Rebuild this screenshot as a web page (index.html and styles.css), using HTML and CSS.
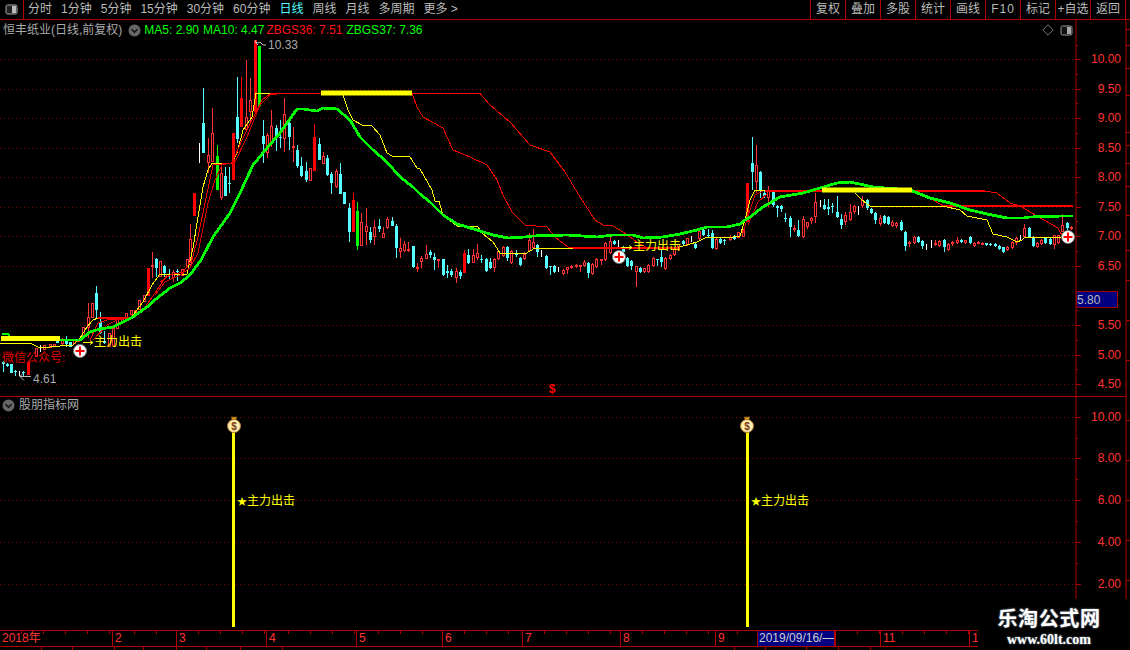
FILE: index.html
```html
<!DOCTYPE html>
<html lang="zh">
<head>
<meta charset="utf-8">
<title>恒丰纸业</title>
<link rel="stylesheet" href="styles.css">
</head>
<body>
<div class="app">
  <header class="toolbar">
    <div class="layout-cell">
      <svg class="panel-icon" width="13" height="11" viewBox="0 0 13 11"><rect x="1" y="1" width="11" height="9" rx="1.5" fill="#222" stroke="#aaa"/><rect x="7" y="2" width="4" height="7" fill="#bbb"/></svg>
    </div>
    <nav class="tabs">
      <span>分时</span><span>1分钟</span><span>5分钟</span><span>15分钟</span><span>30分钟</span><span>60分钟</span>
      <span class="active">日线</span><span>周线</span><span>月线</span><span>多周期</span><span>更多 &gt;</span>
    </nav>
    <div class="actions">
      <span>复权</span><span>叠加</span><span>多股</span><span>统计</span><span>画线</span><span class="wide">F10</span><span>标记</span><span>+自选</span><span>返回</span>
    </div>
  </header>

  <section class="panel upper">
    <div class="legend">
      <span class="stock">恒丰纸业(日线,前复权)</span>
      <svg class="chev" width="13" height="13" viewBox="0 0 13 13"><circle cx="6.5" cy="6.5" r="6" fill="#666"/><path d="M3.5 5.2l3 3 3-3" fill="none" stroke="#111" stroke-width="1.5"/></svg>
      <span class="green">MA5: 2.90</span><span class="green">MA10: 4.47</span><span class="red">ZBGS36: 7.51</span><span class="green">ZBGS37: 7.36</span>
    </div>
    <div class="corner-tools">
      <svg width="12" height="12" viewBox="0 0 12 12"><path d="M6 .8L11.2 6 6 11.2.8 6z" fill="none" stroke="#777"/></svg>
      <svg width="13" height="11" viewBox="0 0 13 11"><rect x="1" y="1" width="11" height="9" rx="1.5" fill="#111" stroke="#999"/><rect x="7" y="2" width="4" height="7" fill="#aaa"/></svg>
    </div>
    <svg class="chart" width="1130" height="376" viewBox="0 20 1130 376">
      <path class="grid" d="M0 59.5H1075M0 89.5H1075M0 118.5H1075M0 148.5H1075M0 177.5H1075M0 207.5H1075M0 236.5H1075M0 266.5H1075M0 325.5H1075M0 355.5H1075M0 384.5H1075"/>
      <g id="candles"></g>
      <polyline class="thin yellow" points="0,343 30,343 40,348 60,346 73,345 80,338 87,327 93,320 98,318"/>
      <polyline class="thin red2" points="90,340 98,323 107,320 130,318 143,310 157,290 167,275"/>
      <polyline class="thin red3" points="93,340 107,325 117,320 130,318"/>
      <polyline class="mid red1" points="98,318 130,318"/>
      <polyline class="thin yellow" points="130,318 133,315 143,302 152,285 160,274 187,274 193,248 198,217 203,187 208,170 212,163 232,163 237,153 243,130 252,117 256,93 272,93"/>
      <polyline class="thin red2" points="160,282 170,275 183,272 192,260 198,237 205,203 213,165 232,163 242,140 253,118 262,100 270,94 280,93"/>
      <polyline class="thin red3" points="155,295 165,282 180,275 190,268 198,253 208,203 215,180 222,165 235,162 247,137 260,105 270,95 285,93"/>
      <polyline class="thin red2" points="270,93.500 480,93.500 490,105 510,122 530,145 550,152 565,172 580,197 595,220 603,225 613,226 623,232 637,242 647,248"/>
      <polyline class="thin red2" points="412,93 417,107 423,117 443,128 453,150 470,157 487,165 497,180 503,195 512,212 525,225 547,227 555,237 568,247 573,248"/>
      <polyline class="mid red1" points="573,248 680,248"/>
      <polyline class="thin yellow" points="343,95 348,110 353,120 362,125 372,126 380,135 387,153 392,156 410,157 417,168 420,169 432,190 435,201 439,201 443,215 457,226 478,227 482,233 493,242 500,253 525,254 535,248 573,248"/>
      <polyline class="thin yellow" points="680,247 697,242 707,237 733,237 740,236 745,220 750,200 755,190 765,191"/>
      <polyline class="thin red3" points="743,233 750,210 755,195 763,191"/>
      <polyline class="thin red3" points="748,225 758,202 768,193"/>
      <polyline class="mid red1" points="765,191 822,191"/>
      <polyline class="mid red1" points="912,191 985,191"/>
      <polyline class="thin red2" points="985,191 997,193 1010,203 1020,206 1037,216 1058,228 1063,237"/>
      <polyline class="thin red2" points="913,191 930,198 943,206"/>
      <polyline class="mid red1" points="943,206 1073,206"/>
      <polyline class="thin yellow" points="855,193 862,200 870,206 943,206 960,210 967,216 987,220 993,234 1007,237 1017,242 1022,240 1025,237 1063,237"/>
      <polyline class="trend" points="60,340 80,340 90,332 100,329 113,327 133,317 147,307 156,299 170,288 180,283 190,275 201,260 213,237 230,213 240,193 253,165 267,148 280,133 297,109 303,109 317,111 323,108 337,109 350,120 360,137 373,150 387,162 400,177 413,187 420,194 430,202 443,215 457,224 467,227 477,230 493,235 508,238 525,237 533,236 567,235 597,237 613,235 633,235 643,238 663,237 680,234 697,230 707,227 727,227 740,224 745,220 750,217 763,207 780,197 803,193 820,188 837,183 850,182 873,187 910,190 930,198 950,203 970,210 987,214 1007,218 1023,218 1030,217 1063,216 1073,216"/>
      <polyline class="trend" points="2,334 8,334 10,336"/>
      <path class="bar" d="M1 338.500H60M321 93H412M822 190H912"/>
      <path class="axis" d="M1076 20V396M1126 20V396M1076 59.500h5M1076 89.500h5M1076 118.500h5M1076 148.500h5M1076 177.500h5M1076 207.500h5M1076 236.500h5M1076 266.500h5M1076 325.500h5M1076 355.500h5M1076 384.500h5M1076 45.500h2M1076 74.500h2M1076 103.500h2M1076 133.500h2M1076 162.500h2M1076 192.500h2M1076 221.500h2M1076 251.500h2M1076 310.500h2M1076 340.500h2M1076 369.500h2M1126 29.500h4M1126 45.500h4M1126 68.500h4M1126 95.500h4M1126 132.500h4M1126 145.500h4M1126 163.500h4M1126 186.500h4M1126 215.500h4M1126 250.500h4M1126 280.500h4M1126 320.500h4M1126 360.500h4"/>
      <g class="price">
        <text x="1121" y="63">10.00</text><text x="1121" y="93">9.50</text><text x="1121" y="122">9.00</text><text x="1121" y="152">8.50</text><text x="1121" y="181">8.00</text><text x="1121" y="211">7.50</text><text x="1121" y="240">7.00</text><text x="1121" y="270">6.50</text><text x="1121" y="329">5.50</text><text x="1121" y="359">5.00</text><text x="1121" y="388">4.50</text>
      </g>
      <rect class="current-box" x="1076.500" y="291.500" width="41" height="16"/>
      <text class="current" x="1077" y="304">5.80</text>
      <g class="note">
        <text class="gray" x="268" y="49">10.33</text>
        <text class="gray" x="33" y="383">4.61</text>
        <path class="arrow" d="M266 45h-3l-3-3-2 1-3-1 1-2M255 42l3 3"/>
        <path class="arrow" d="M31 376.500H20m4-4l-4 4 4 4"/>
        <text class="bull" x="94" y="346">主力出击</text>
        <text class="bull" x="633" y="250">主力出击</text>
        <path class="arrow-y" d="M83 342.500h10m-3-2l3 2-3 2"/>
        <path class="arrow-y" d="M621 247.500h11m-3-2l3 2-3 2"/>
        <text class="wechat" x="2" y="362">微信公众号:</text>
        <text class="dollar" x="552" y="393">$</text>
      </g>
      <g class="plus"><circle cx="80" cy="351" r="6.500"/><path d="M80 346.500v9M75.500 351h9"/></g>
      <g class="plus"><circle cx="619" cy="257" r="6.500"/><path d="M619 252.500v9M614.500 257h9"/></g>
      <g class="plus"><circle cx="1068" cy="237" r="6.500"/><path d="M1068 232.500v9M1063.500 237h9"/></g>
    </svg>
  </section>

  <section class="panel lower">
    <div class="legend lower-legend">
      <svg class="chev" width="13" height="13" viewBox="0 0 13 13"><circle cx="6.5" cy="6.5" r="6" fill="#666"/><path d="M3.5 5.2l3 3 3-3" fill="none" stroke="#111" stroke-width="1.5"/></svg>
      <span class="stock">股朋指标网</span>
    </div>
    <svg class="chart" width="1130" height="234" viewBox="0 396 1130 234">
      <defs>
        <g id="bag">
          <path d="M-3 -9h6l-1.500 3h-3z" fill="#e0a020" stroke="#7a4a10" stroke-width=".8"/>
          <circle cx="0" cy="0" r="6.500" fill="#ffeeb0" stroke="#b07828"/>
          <text class="bag-sign" x="0" y="3.500">$</text>
        </g>
      </defs>
      <path class="grid" d="M0 417.500H1075M0 458.500H1075M0 500.500H1075M0 542.500H1075M0 584.500H1075"/>
      <path class="signal" d="M233.500 417V627M747.500 417V627"/>
      <use href="#bag" x="234" y="426"/>
      <use href="#bag" x="747" y="426"/>
      <text class="bull" x="237" y="505"><tspan class="star">★</tspan>主力出击</text>
      <text class="bull" x="751" y="505"><tspan class="star">★</tspan>主力出击</text>
      <path class="axis" d="M0 396.500H1126M1076 396V599M1126 396V599M1076 417.500h5M1076 458.500h5M1076 500.500h5M1076 542.500h5M1076 584.500h5M1076 438.500h2M1076 479.500h2M1076 521.500h2M1076 563.500h2M1126 420.500h4M1126 460.500h4M1126 500.500h4M1126 540.500h4M1126 580.500h4"/>
      <g class="price">
        <text x="1121" y="421">10.00</text><text x="1121" y="462">8.00</text><text x="1121" y="504">6.00</text><text x="1121" y="546">4.00</text><text x="1121" y="588">2.00</text>
      </g>
    </svg>
  </section>

  <div class="timeline">
    <span class="month" style="width:112px">2018年</span>
    <span class="month" style="width:64px">2</span>
    <span class="month" style="width:90px">3</span>
    <span class="month" style="width:90px">4</span>
    <span class="month" style="width:86px">5</span>
    <span class="month" style="width:80px">6</span>
    <span class="month" style="width:98px">7</span>
    <span class="month" style="width:95px">8</span>
    <span class="month" style="width:42px">9</span>
    <span class="date">2019/09/16/—</span>
    <span class="month blank" style="width:45px"></span>
    <span class="month" style="width:89px">11</span>
    <span class="month" style="width:10px">1</span>
  </div>
  <div class="status">
    <i style="width:42px"></i><i style="width:31px"></i><i style="width:42px"></i><i style="width:29px"></i><i style="width:33px"></i><i style="width:30px"></i><i style="width:34px"></i><i style="width:42px"></i><i style="width:452px"></i><i style="width:31px"></i><i style="width:41px"></i><i style="width:32px"></i><i style="width:32px"></i>
  </div>
  <aside class="watermark">
    <strong>乐淘公式网</strong>
    <em>www.60lt.com</em>
  </aside>
</div>
<script src="chart.js"></script>
</body>
</html>
```
FILE: styles.css
```css
* { box-sizing: border-box; }
html, body { margin: 0; padding: 0; background: #000; }
body { font: 12px "Liberation Sans", "Noto Sans CJK SC", sans-serif; color: #bbb; }
.app { position: relative; width: 1130px; height: 650px; overflow: hidden; background: #000; display: flex; flex-direction: column; }

.toolbar { height: 20px; flex: none; display: flex; align-items: stretch; border-bottom: 1px solid #b00000; line-height: 19px; }
.layout-cell { width: 24px; border-right: 1px solid #b00000; display: flex; align-items: center; justify-content: center; }
.tabs { display: flex; gap: 9px; padding-left: 4px; white-space: nowrap; }
.tabs .active { color: #5ff; }
.actions { margin-left: auto; margin-right: 4px; display: flex; border-right: 1px solid #b00000; }
.actions span { width: 35px; text-align: center; border-left: 1px solid #b00000; white-space: nowrap; }
.actions .wide { letter-spacing: 1px; }

.panel { position: relative; flex: none; }
.upper { height: 376px; }
.lower { height: 234px; }
.chart { display: block; }

.legend { position: absolute; left: 3px; top: 2px; display: flex; align-items: center; gap: 4px; white-space: nowrap; line-height: 16px; }
.legend .chev { margin: 0 -1px 0 2px; }
.lower-legend { left: 2px; top: 1px; }
.lower-legend .chev { margin: 0; }
.stock { color: #aaa; }
.green { color: #0f0; }
.red { color: #f11; margin-left: -2px; }
.corner-tools { position: absolute; left: 1042px; top: 4px; display: flex; align-items: center; gap: 6px; }

.grid { fill: none; stroke: #800000; stroke-width: 1; stroke-dasharray: 1 3; }
.axis { fill: none; stroke: #b00000; stroke-width: 1; }
.price text { fill: #f33; text-anchor: end; font-size: 12px; }
.current-box { fill: #000080; stroke: #a00000; }
.current { fill: #bbb; font-size: 12px; }

.thin, .mid, .trend { fill: none; stroke-linejoin: round; shape-rendering: crispEdges; }
.thin { stroke-width: 1; }
.mid { stroke: #f00; stroke-width: 1.400; }
.yellow { stroke: #ff0; }
.red1 { stroke: #f00; }
.red2 { stroke: #f00; }
.red3 { stroke: #d80000; }
.trend { stroke: #0f0; stroke-width: 2.800; }
.bar { fill: none; stroke: #ff0; stroke-width: 5; }
.signal { fill: none; stroke: #ff0; stroke-width: 3; }

.note text, .bull { font-size: 12px; }
.gray { fill: #aaa; }
.bull { fill: #ff0; }
.star { font-size: 10px; }
.wechat { fill: #e00000; }
.dollar { fill: #f00; font-weight: bold; text-anchor: middle; }
.arrow { fill: none; stroke: #bbb; }
.arrow-y { fill: none; stroke: #ff0; }
.plus circle { fill: #fff; stroke: #777; stroke-width: 1; }
.plus path { fill: none; stroke: #f00; stroke-width: 2; }
.bag-sign { fill: #7a3a10; font-size: 10px; font-weight: bold; text-anchor: middle; }

.cyan { fill: #5ff; }
.wick-red { fill: #f33; }
.solid-red { fill: #f00; }
.solid-green { fill: #0f0; }
.white { fill: #fff; }
.hollow { fill: #000; stroke: #f33; stroke-width: 1; }
#candles { shape-rendering: crispEdges; }

.timeline { height: 17px; width: 978px; flex: none; display: flex; border-top: 1px solid #b00000; border-bottom: 1px solid #b00000; line-height: 15px; color: #f33; white-space: nowrap; }
.month { flex: none; padding-left: 2px; border-left: 1px solid #b00000; overflow: hidden;
  background: repeating-linear-gradient(90deg, transparent 0 21px, #b00000 21px 22px) 0 0 / 100% 3px no-repeat; }
.month:first-child { border-left: 0; }
.date { flex: none; width: 78px; background: #000080; color: #ccc; border: 1px solid #b00000; border-width: 0 1px; padding-left: 1px; line-height: 15px; overflow: hidden; }
.status { flex: none; height: 3px; width: 978px; display: flex; }
.status i { flex: none; border-right: 1px solid #b00000; }

.watermark { position: absolute; left: 978px; top: 600px; width: 152px; height: 50px; background: #000; color: #fff; display: flex; flex-direction: column; align-items: center; padding: 6px 10px 0 0; text-shadow: 0 0 2px #9ab; }
.watermark strong { font: bold 20px/24px "Noto Sans CJK SC", sans-serif; letter-spacing: .6px; }
.watermark em { font: bold 14px/16px "Liberation Serif", serif; margin-top: 2px; }
```
FILE: chart.js
```js
// [kind, x, bodyTop, bodyBottom, high, low] in page pixels.
// c cyan, r hollow red, R solid red, g solid green, w white doji
var CANDLES = [
['c',3,362,364,361,372],['c',7,364,366,363,367],['c',11,364,373],['c',15,371,372,370,376],['w',19,371,376],['c',23,372,373,371,376],
['R',28,362,375],['r',36,348,357],['w',40,345,352],['r',44,345,350],['r',50,344,348],['r',54,344,347],['c',57,340,343],['r',62,340,344,338,345],['c',66,339,344,336,347],['c',70,342,347],['r',74,339,344],['r',78,339,342],
['r',83,327,338],['r',88,317,328,303,338],['r',92,303,318],['c',96,293,310,286,319],['c',100,322,333,312,334],['c',104,341,343,331,344],['r',109,333,347],['r',113,328,346],['r',117,317,329],['r',122,317,322],['r',126,313,320],['r',131,310,315],['r',135,310,314],['r',139,300,310],['r',144,295,302],
['R',148,268,296],['r',152,265,267,252,278],['c',156,259,268,258,277],['r',160,261,277],['c',164,266,273,265,277],['c',169,274,275,269,280],['r',173,272,278,270,282],['c',177,271,272,269,281],['r',182,269,276],['r',187,259,267],['r',190,239,265,224,266],['R',194,193,216],
['w',199,143,163],['c',203,123,153,88,153],['r',208,155,163,138,173],['r',212,133,162,108,162],['g',217,156,190,145,190],['r',221,173,198,163,200],['c',225,176,196,167,196],['c',229,183,184,167,193],['R',233,133,180],['c',237,117,139,77,143],['R',241,98,127,77,127],['r',246,117,130,60,130],['r',250,100,112,78,123],['R',255,40,112],['g',259,46,106],
['c',263,136,144,120,163],['r',267,135,153,133,158],['r',271,126,143,110,147],['c',276,128,138,125,151],['c',280,137,138,120,148],['r',284,114,139,98,152],['c',289,123,137,120,150],['r',293,146,148,127,162],['c',297,150,166,145,168],['c',301,166,176,157,177],['c',306,171,180,162,182],['r',310,168,181],['R',314,137,171,124,171],['c',319,144,160,138,160],['r',323,156,164,152,164],['c',327,158,175,155,176],['c',331,174,183,172,194],['r',336,171,187,169,188],['c',340,174,194,163,194],['c',344,192,204],
['c',349,208,232,203,242],['R',353,200,232,193,232],['g',357,211,246,202,250],['r',361,222,246,213,246],['r',366,226,232,208,245],['c',370,232,240,227,243],['r',374,227,237,220,245],['c',379,226,229,219,232],['r',383,233,238,227,238],['r',387,219,228,217,229],['c',392,221,226,217,226],['c',396,226,248,224,258],['r',400,248,252,238,258],['r',404,244,251,241,252],['r',408,249,250,242,252],
['c',413,246,267,246,268],['r',417,267,269,263,272],['r',421,258,262,256,268],['r',426,254,259,245,259],['c',430,252,255,250,258],['c',434,257,260,253,270],['r',438,259,261,259,268],['c',443,259,275,259,276],['c',447,271,273,265,278],['c',451,271,275,269,277],['r',456,271,278,268,283],['c',460,272,276,270,279],['R',464,253,273,250,273],['c',468,255,263,249,264],['r',473,255,263,249,263],['r',477,253,258,244,260],['c',481,259,260,255,263],
['c',486,259,271,258,272],['c',490,262,268,258,269],['r',494,259,268,258,272],['r',498,251,259,250,260],['r',503,247,256,246,257],['c',507,247,258,246,261],['r',511,251,263,250,264],['c',516,254,255,250,257],['c',520,258,265,257,266],['r',524,254,259,252,260],['r',529,240,251,233,252],['r',533,242,248,229,249],['c',537,245,252,244,257],['w',541,250,257],['c',546,256,268,255,269],['c',550,266,267,266,275],['c',554,266,272,265,273],['w',558,267,272],['r',563,270,274,269,275],['r',567,267,270,267,274],['r',571,266,268,265,269],['r',576,265,267,264,268],['r',580,265,267,265,272],['r',584,262,266,260,267],['c',588,263,273,262,278],['r',592,264,274,263,275],['r',596,259,267,258,268],['r',601,259,260,259,265],
['r',605,243,260,242,261],['r',610,241,253,237,254],['c',614,241,244,240,245],['w',618,240,247],['c',623,248,252,246,253],['c',627,258,266,257,267],['c',631,261,266,260,270],['r',636,266,272,266,287],['c',640,268,272,267,273],['r',644,268,272,268,273],['r',648,265,272,264,273],['r',653,258,266,257,267],['c',657,259,260,259,266],['c',661,257,262,250,267],['r',665,258,269,257,270],['r',670,255,259,254,260],['r',674,248,255,247,256],['r',678,244,250,244,251],['c',683,241,244,240,245],['r',687,238,245,238,246],['w',691,236,242],['c',695,244,248,243,249],['r',699,231,239,230,240],['c',703,230,235,227,236],['c',708,235,236,229,238],['c',712,233,248,230,249],['r',716,239,249,238,250],['c',720,239,243,238,244],['c',724,240,241,239,245],['r',730,237,240,235,241],
['c',734,236,239,235,240],['r',738,232,238],['r',743,229,237],['R',747,183,222],['c',752,163,172,137,190],['r',756,165,182,145,193],['c',760,172,190,171,198],['c',764,193,196,190,198],['r',768,190,198,186,207],['c',773,192,205,190,207],['c',777,206,208,205,217],['c',781,206,209,205,212],['c',785,218,219,213,222],['c',790,218,227,216,237],['r',794,228,230,225,232],['c',798,230,236,220,237],['r',803,219,237,216,238],['r',807,222,227,222,229],['r',811,218,221,217,224],['r',815,202,217,193,223],['w',820,200,207],['c',824,205,209,199,210],['c',828,207,209,199,215],['c',832,206,207,203,213],['c',837,212,217,196,218],['c',841,219,225,214,229],['r',845,215,222,212,225],['r',850,212,220,204,221],['r',854,206,212,205,214],['w',858,206,215],['r',862,200,206,196,208],['c',867,200,208,199,210],['c',871,209,213,208,214],['c',875,213,220,212,224],['r',880,218,224,215,226],['c',884,216,223,215,224],['c',888,217,224,216,225],['r',892,222,226,220,227],['r',896,223,226,222,228],['c',901,222,230,220,231],
['c',905,232,246,231,251],['r',909,242,244,241,247],['r',914,237,243,236,244],['c',918,237,242,236,243],['c',922,241,246,240,249],['w',926,244,250],['w',931,240,248],['r',935,243,245,240,246],['r',939,241,246,240,247],['c',944,240,247,239,252],['r',948,244,250,243,251],['r',952,242,244,241,246],['r',957,240,243,237,244],['c',961,240,242,239,243],['r',965,240,243,240,244],['c',970,237,243,236,244],['r',974,243,246,242,247],['r',978,242,243,241,244],['r',982,243,244,242,245],['c',986,243,245,243,246],['c',990,244,245,243,246],['c',995,244,246,243,247],['c',999,246,249,245,250],['c',1003,247,252,247,253],['r',1007,247,250,246,251],['r',1012,242,248,241,249],['r',1016,238,243,237,245],['w',1020,235,240],['r',1024,228,237,224,238],['c',1029,228,237,227,238],['c',1033,237,246,236,247],['r',1037,243,247,242,248],['r',1041,240,244,239,245],['c',1045,238,243,237,244],['c',1050,239,244,238,245],['r',1054,235,245,235,249],['r',1058,235,243,235,244],['r',1062,225,232,214,232],['c',1067,223,228,222,232],['r',1071,227,229,226,230]
];

(function () {
  var NS = 'http://www.w3.org/2000/svg';
  var host = document.getElementById('candles');
  var wickClass = { c: 'cyan', r: 'wick-red', R: 'solid-red', g: 'solid-green', w: 'white' };

  function rect(x, y, w, h, cls) {
    var el = document.createElementNS(NS, 'rect');
    el.setAttribute('x', x);
    el.setAttribute('y', y);
    el.setAttribute('width', w);
    el.setAttribute('height', Math.max(h, 1));
    el.setAttribute('class', cls);
    host.appendChild(el);
  }

  CANDLES.forEach(function (c) {
    var kind = c[0], x = c[1], top = c[2], bot = c[3];
    var hi = c.length > 4 ? c[4] : top, lo = c.length > 5 ? c[5] : bot;
    if (kind === 'w') { rect(x, top, 1, bot - top, 'white'); return; }
    rect(x, hi, 1, lo - hi, wickClass[kind]);
    if (kind === 'r') {
      rect(x - 1 + 0.5, top + 0.5, 2, Math.max(bot - top - 1, 1), 'hollow');
    } else {
      rect(x - 1, top, 3, bot - top, wickClass[kind]);
    }
  });
})();
```
